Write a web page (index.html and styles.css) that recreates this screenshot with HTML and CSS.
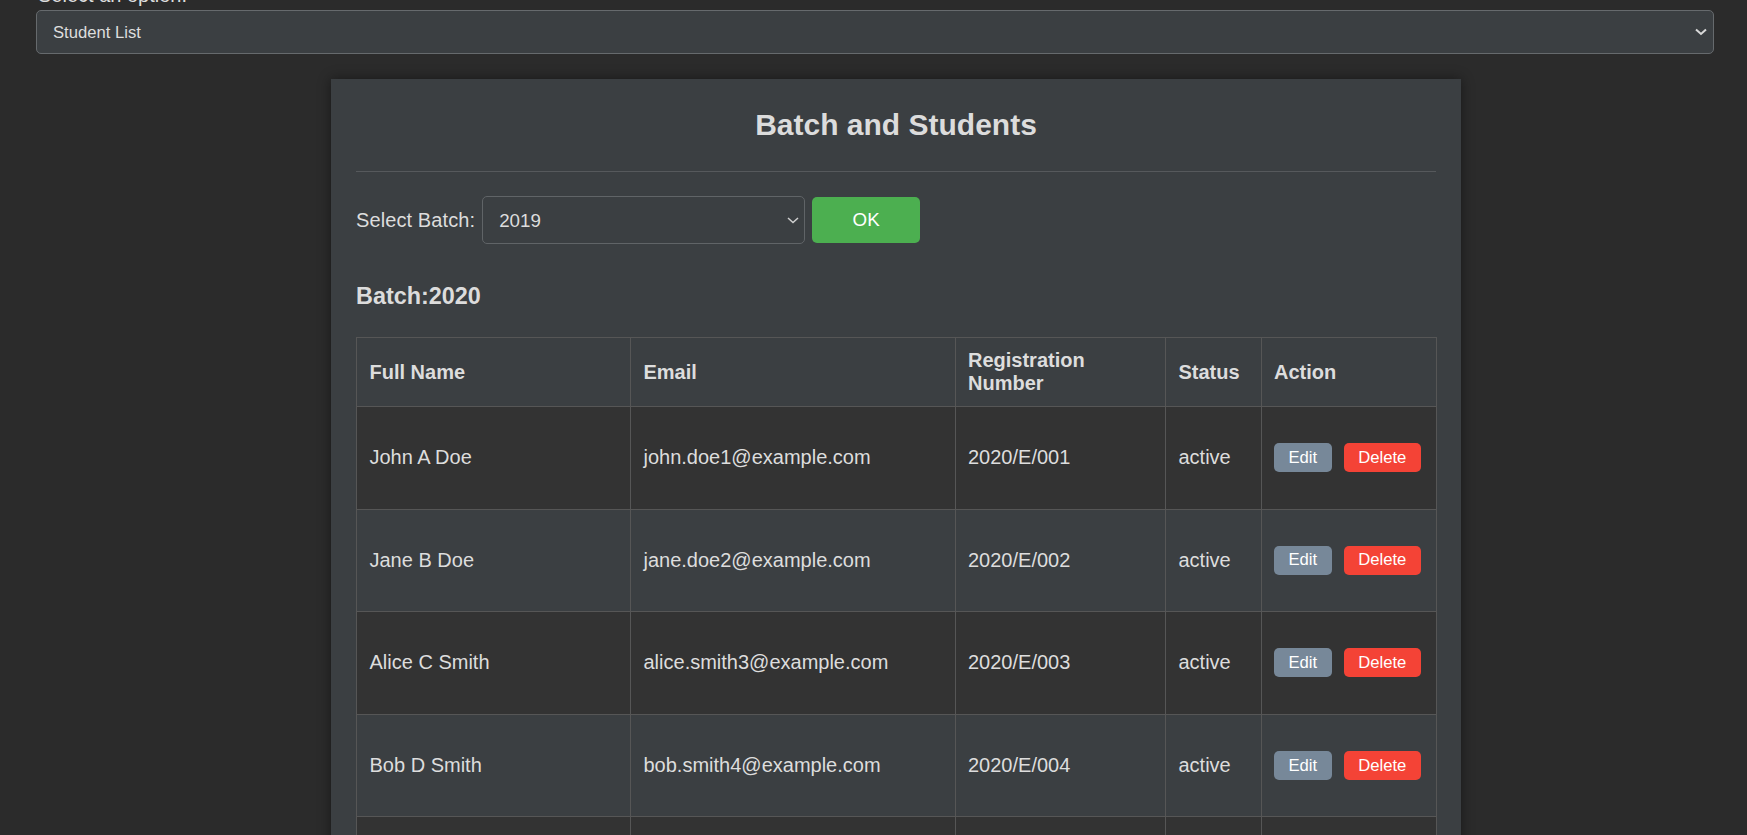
FILE: index.html
```html
<!DOCTYPE html>
<html lang="en">
<head>
<meta charset="utf-8">
<title>Batch and Students</title>
<link rel="stylesheet" href="styles.css">
</head>
<body>
<div class="page">
  <label class="top-label" for="view">Select an option:</label>
  <div class="select-wrap">
    <select id="view" class="top-select">
      <option>Student List</option>
    </select>
    <svg class="chevron chevron-top" width="12" height="8" viewBox="0 0 12 8"><path d="M1 1.5 L6 6 L11 1.5" fill="none" stroke="#d8d8d8" stroke-width="2"/></svg>
  </div>

  <div class="card">
    <h2 class="title">Batch and Students</h2>
    <hr class="divider">
    <div class="batch-row">
      <label class="batch-label" for="batch">Select Batch:</label>
      <div class="select-wrap batch-wrap">
        <select id="batch" class="batch-select">
          <option>2019</option>
        </select>
        <svg class="chevron chevron-batch" width="12" height="7" viewBox="0 0 12 7"><path d="M1 1 L6 5.5 L11 1" fill="none" stroke="#cfcfcf" stroke-width="1.5"/></svg>
      </div>
      <button class="ok-btn">OK</button>
    </div>
    <h3 class="batch-heading">Batch:2020</h3>
    <table class="students">
      <colgroup>
        <col class="c-name"><col class="c-email"><col class="c-reg"><col class="c-status"><col class="c-action">
      </colgroup>
      <thead>
        <tr><th>Full Name</th><th>Email</th><th>Registration Number</th><th>Status</th><th>Action</th></tr>
      </thead>
      <tbody>
        <tr><td>John A Doe</td><td>john.doe1@example.com</td><td>2020/E/001</td><td>active</td><td><div class="actions"><button class="btn edit">Edit</button><button class="btn delete">Delete</button></div></td></tr>
        <tr><td>Jane B Doe</td><td>jane.doe2@example.com</td><td>2020/E/002</td><td>active</td><td><div class="actions"><button class="btn edit">Edit</button><button class="btn delete">Delete</button></div></td></tr>
        <tr><td>Alice C Smith</td><td>alice.smith3@example.com</td><td>2020/E/003</td><td>active</td><td><div class="actions"><button class="btn edit">Edit</button><button class="btn delete">Delete</button></div></td></tr>
        <tr><td>Bob D Smith</td><td>bob.smith4@example.com</td><td>2020/E/004</td><td>active</td><td><div class="actions"><button class="btn edit">Edit</button><button class="btn delete">Delete</button></div></td></tr>
        <tr><td>Carol E Brown</td><td>carol.brown5@example.com</td><td>2020/E/005</td><td>active</td><td><div class="actions"><button class="btn edit">Edit</button><button class="btn delete">Delete</button></div></td></tr>
      </tbody>
    </table>
  </div>
</div>
</body>
</html>
```

FILE: styles.css
```css
html, body {
  margin: 0;
  padding: 0;
}
body {
  background: #2b2b2b;
  color: #dddddd;
  font-family: "Liberation Sans", Arial, sans-serif;
  font-size: 20px;
  overflow: hidden;
}
.page {
  padding: 0 33px 0 36px;
}
.top-label {
  display: block;
  margin-top: -16px;
  margin-bottom: 3px;
  line-height: 23px;
  padding-left: 2px;
  color: #dddddd;
}
.select-wrap {
  position: relative;
}
.chevron {
  position: absolute;
  pointer-events: none;
}
.chevron-top {
  right: 7px;
  top: 18px;
}
.top-select {
  display: block;
  width: 100%;
  height: 44px;
  -webkit-appearance: none;
  appearance: none;
  background: #3b3f42;
  border: 1px solid #666a6d;
  border-radius: 5px;
  color: #dddddd;
  font-family: "Liberation Sans", Arial, sans-serif;
  font-size: 16.67px;
  padding: 0 30px 0 16px;
  outline: none;
}
.card {
  margin: 25px 0 0 295px;
  width: 1130px;
  box-sizing: border-box;
  padding: 25px;
  background: #3b3f42;
  box-shadow: 0 0 12px rgba(0, 0, 0, 0.45);
}
.title {
  margin: 3px 0 0;
  font-size: 30px;
  line-height: 35px;
  font-weight: bold;
  text-align: center;
  color: #dcdcdc;
}
.divider {
  margin: 29px 0 0;
  border: 0;
  border-top: 1px solid #56595c;
  height: 0;
}
.batch-row {
  margin-top: 24px;
  display: flex;
  align-items: center;
  gap: 7px;
}
.batch-label {
  font-size: 20px;
  color: #dddddd;
  letter-spacing: 0.1px;
}
.batch-wrap {
  width: 323px;
}
.chevron-batch {
  right: 6px;
  top: 21px;
}
.batch-select {
  display: block;
  width: 100%;
  height: 48px;
  -webkit-appearance: none;
  appearance: none;
  background: #3b3f42;
  border: 1px solid #606467;
  border-radius: 5px;
  color: #dddddd;
  font-family: "Liberation Sans", Arial, sans-serif;
  font-size: 18.75px;
  padding: 0 30px 0 16px;
  outline: none;
}
.ok-btn {
  width: 108px;
  height: 46px;
  border: 0;
  border-radius: 5px;
  background: #4caf50;
  color: #ffffff;
  font-family: "Liberation Sans", Arial, sans-serif;
  font-size: 18.75px;
}
.batch-heading {
  margin: 39px 0 0;
  font-size: 23.4px;
  line-height: 27px;
  font-weight: bold;
  color: #dcdcdc;
}
.students {
  margin-top: 27px;
  width: 100%;
  table-layout: fixed;
  border-collapse: collapse;
  font-size: 20px;
  color: #dddddd;
}
.c-name { width: 274px; }
.c-email { width: 324.5px; }
.c-reg { width: 210.5px; }
.c-status { width: 95.5px; }
.c-action { width: 175.5px; }
.students th,
.students td {
  border: 1px solid #565656;
  text-align: left;
  vertical-align: middle;
  padding: 0 12.5px;
}
.students th {
  padding-top: 11px;
  padding-bottom: 11px;
  line-height: 23px;
  font-weight: bold;
}
.students thead tr {
  background: #3b3f42;
}
.students tbody td {
  height: 102.6px;
  box-sizing: border-box;
  line-height: 23px;
}
.students tbody tr:nth-child(odd) {
  background: #333333;
}
.students tbody tr:nth-child(even) {
  background: #3b3f42;
}
.actions {
  display: flex;
  gap: 12px;
}
.btn {
  height: 29px;
  padding: 0 14.5px;
  border: 0;
  border-radius: 5px;
  color: #ffffff;
  font-family: "Liberation Sans", Arial, sans-serif;
  font-size: 16.67px;
}
.edit {
  background: #778899;
}
.delete {
  background: #f44336;
}
```
